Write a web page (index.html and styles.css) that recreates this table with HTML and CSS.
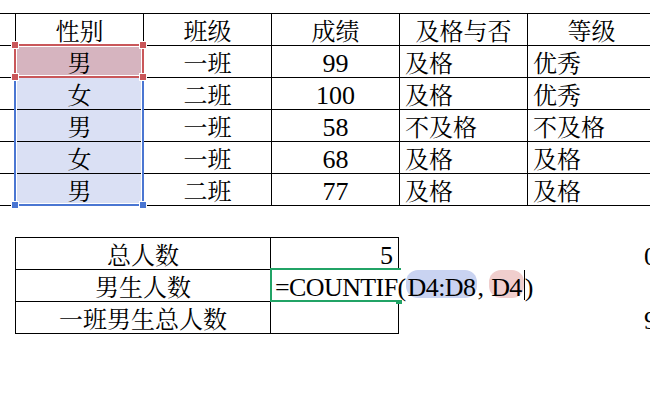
FILE: index.html
```html
<!DOCTYPE html>
<html lang="zh-CN">
<head>
<meta charset="utf-8">
<title>COUNTIF</title>
<link rel="stylesheet" href="styles.css">
</head>
<body>
<div class="sheet">
  <div class="grid top">
    <div class="c"></div><div class="c ctr">性别</div><div class="c ctr">班级</div><div class="c ctr">成绩</div><div class="c ctr">及格与否</div><div class="c ctr">等级</div>
    <div class="c"></div><div class="c ctr sel-red">男</div><div class="c ctr">一班</div><div class="c ctr num">99</div><div class="c lft">及格</div><div class="c lft">优秀</div>
    <div class="c"></div><div class="c ctr sel-blue">女</div><div class="c ctr">二班</div><div class="c ctr num">100</div><div class="c lft">及格</div><div class="c lft">优秀</div>
    <div class="c"></div><div class="c ctr sel-blue">男</div><div class="c ctr">一班</div><div class="c ctr num">58</div><div class="c lft">不及格</div><div class="c lft">不及格</div>
    <div class="c"></div><div class="c ctr sel-blue">女</div><div class="c ctr">一班</div><div class="c ctr num">68</div><div class="c lft">及格</div><div class="c lft">及格</div>
    <div class="c"></div><div class="c ctr sel-blue">男</div><div class="c ctr">二班</div><div class="c ctr num">77</div><div class="c lft">及格</div><div class="c lft">及格</div>
  </div>

  <div class="grid bottom">
    <div class="b first-row first-col ctr">总人数</div><div class="b first-row rgt num">5</div><div class="x rgt num">0</div>
    <div class="b first-col ctr">男生人数</div><div class="b"></div><div class="x"></div>
    <div class="b first-col ctr">一班男生总人数</div><div class="b"></div><div class="x rgt num">9</div>
  </div>

  <div class="box-red"></div>
  <div class="box-blue"></div>
  <span class="handle red h1"></span>
  <span class="handle red h2"></span>
  <span class="handle red h3"></span>
  <span class="handle red h4"></span>
  <span class="handle blue h5"></span>
  <span class="handle blue h6"></span>

  <div class="box-green"></div>
  <span class="handle-green"></span>
  <div class="editor">
    <span class="seg">=COUNTIF(</span><span class="seg pill pill-blue">D4:D8</span><span class="seg">,&nbsp;</span><span class="seg pill pill-red">D4</span><span class="caret"></span><span class="seg">)</span>
  </div>
</div>
</body>
</html>
```

FILE: styles.css
```css
html, body {
  margin: 0;
  padding: 0;
  background: #ffffff;
  overflow: hidden;
}
body {
  width: 650px;
  height: 402px;
  font-family: "Liberation Serif", "Noto Serif CJK SC", "Noto Sans CJK SC", serif;
  color: #000;
}
.sheet {
  position: relative;
  width: 650px;
  height: 402px;
  overflow: hidden;
}
.grid {
  display: grid;
}
.top {
  margin-top: 13px;
  width: 656px;
  grid-template-columns: 16px repeat(5, 128px);
  border-top: 1px solid #000;
}
.c {
  box-sizing: border-box;
  height: 32px;
  border-right: 1px solid #000;
  border-bottom: 1px solid #000;
  display: flex;
  align-items: flex-end;
  font-size: 24px;
  line-height: 24px;
  padding-bottom: 1px;
  white-space: nowrap;
}
.ctr { justify-content: center; }
.lft { justify-content: flex-start; padding-left: 5px; }
.rgt { justify-content: flex-end; padding-right: 5px; }
.num { font-size: 26px; }
.sel-red { background: #d6b4bf; }
.sel-blue { background: #dae0f4; }

.bottom {
  margin-top: 31px;
  margin-left: 15px;
  grid-template-columns: 256px 128px 256px;
}
.b, .x {
  box-sizing: border-box;
  display: flex;
  align-items: flex-end;
  font-size: 24px;
  line-height: 24px;
  padding-bottom: 1px;
  white-space: nowrap;
}
.b {
  height: 32px;
  border-right: 1px solid #000;
  border-bottom: 1px solid #000;
}
.b.first-row { height: 33px; border-top: 1px solid #000; }
.b.first-col { border-left: 1px solid #000; }
.b.num, .x.num { font-size: 26px; }
.x.rgt { padding-right: 0; margin-right: -2px; }

.box-red {
  position: absolute;
  left: 14px;
  top: 44px;
  width: 130px;
  height: 34px;
  box-sizing: border-box;
  border: 2px solid #c9575a;
  box-shadow: inset 0 0 0 1px #ffffff;
}
.box-blue {
  position: absolute;
  left: 14px;
  top: 78px;
  width: 130px;
  height: 128px;
  box-sizing: border-box;
  border: 2px solid #4a76d2;
  border-top: none;
  box-shadow: inset 0 -1px 0 0 #ffffff, inset 1px 0 0 0 #ffffff, inset -1px 0 0 0 #ffffff;
}
.handle {
  position: absolute;
  width: 6px;
  height: 6px;
  box-shadow: 0 0 0 1px #ffffff;
}
.handle.red { background: #c9575a; }
.handle.blue { background: #4a76d2; }
.h1 { left: 12px; top: 42px; }
.h2 { left: 140px; top: 42px; }
.h3 { left: 12px; top: 74px; }
.h4 { left: 140px; top: 74px; }
.h5 { left: 12px; top: 202px; }
.h6 { left: 140px; top: 202px; }

.box-green {
  position: absolute;
  left: 270px;
  top: 268px;
  width: 131px;
  height: 34px;
  box-sizing: border-box;
  border: 2px solid #21a366;
}
.handle-green {
  position: absolute;
  left: 396px;
  top: 300px;
  width: 6px;
  height: 4px;
  background: #21a366;
}
.editor {
  position: absolute;
  left: 272px;
  top: 270px;
  height: 30px;
  padding-left: 3px;
  padding-right: 6px;
  background: #ffffff;
  display: flex;
  align-items: flex-start;
  font-size: 26px;
  letter-spacing: -0.6px;
  white-space: nowrap;
}
.seg {
  display: block;
  height: 28px;
  line-height: 36px;
}
.pill {
  border-radius: 12px;
  padding: 0 2px;
}
.pill-blue { background: #c9d3f1; }
.pill-red { background: #f0cecd; }
.caret {
  display: block;
  width: 1px;
  height: 30px;
  background: #000;
}
```
